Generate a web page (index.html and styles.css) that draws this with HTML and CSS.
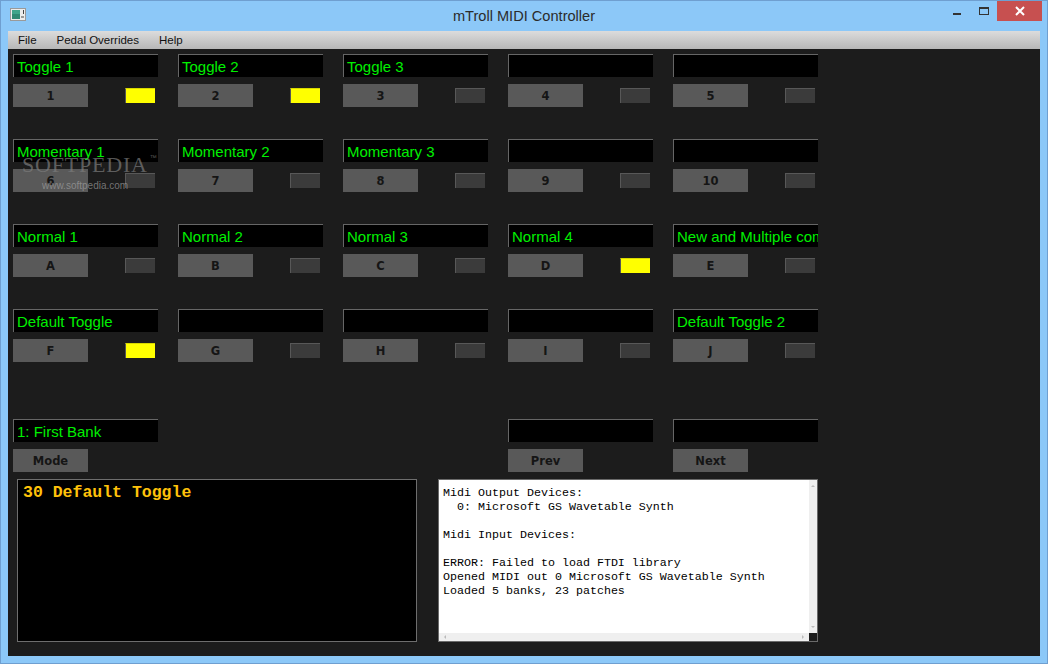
FILE: index.html
```html
<!DOCTYPE html>
<html lang="en">
<head>
    <meta charset="UTF-8">
    <title>mTroll MIDI Controller</title>
    <link rel="stylesheet" href="styles.css">
</head>
<body>
<div class="window">
    <div class="titlebar">
        <div class="titlebar-left">
            <svg class="app-icon" width="16" height="13" viewBox="0 0 16 13">
                <rect x="0.5" y="0.5" width="15" height="12" fill="#ececec" stroke="#9a9a9a"/>
                <rect x="2" y="2" width="8" height="9" fill="#2f8a74"/>
                <rect x="2" y="2" width="8" height="4" fill="#3fa58b"/>
                <rect x="11" y="8" width="3" height="2" fill="#9a9a9a"/>
                <rect x="13" y="2" width="1" height="4" fill="#444"/>
            </svg>
        </div>
        <div class="title">mTroll MIDI Controller</div>
        <div class="caption">
            <svg class="cap-btn" width="26" height="20"><rect x="9" y="12" width="8" height="2" fill="#333"/></svg>
            <svg class="cap-btn" width="27" height="20"><rect x="9.5" y="6.5" width="9" height="7" fill="none" stroke="#333"/><rect x="9" y="6" width="10" height="2" fill="#333"/></svg>
            <svg class="cap-btn close" width="45" height="20"><path d="M19 6 L27 14 M27 6 L19 14" stroke="#fff" stroke-width="2"/></svg>
        </div>
    </div>

    <div class="client">
        <div class="menubar">
            <span class="menu-item">File</span>
            <span class="menu-item">Pedal Overrides</span>
            <span class="menu-item">Help</span>
        </div>

        <div class="content">
            <div class="pedals">
                <div class="slot"><div class="name">Toggle 1</div><div class="ctl"><div class="btn">1</div><div class="led on"></div></div></div>
                <div class="slot"><div class="name">Toggle 2</div><div class="ctl"><div class="btn">2</div><div class="led on"></div></div></div>
                <div class="slot"><div class="name">Toggle 3</div><div class="ctl"><div class="btn">3</div><div class="led"></div></div></div>
                <div class="slot"><div class="name"></div><div class="ctl"><div class="btn">4</div><div class="led"></div></div></div>
                <div class="slot"><div class="name"></div><div class="ctl"><div class="btn">5</div><div class="led"></div></div></div>

                <div class="slot"><div class="name">Momentary 1</div><div class="ctl"><div class="btn">6</div><div class="led"></div></div></div>
                <div class="slot"><div class="name">Momentary 2</div><div class="ctl"><div class="btn">7</div><div class="led"></div></div></div>
                <div class="slot"><div class="name">Momentary 3</div><div class="ctl"><div class="btn">8</div><div class="led"></div></div></div>
                <div class="slot"><div class="name"></div><div class="ctl"><div class="btn">9</div><div class="led"></div></div></div>
                <div class="slot"><div class="name"></div><div class="ctl"><div class="btn">10</div><div class="led"></div></div></div>

                <div class="slot"><div class="name">Normal 1</div><div class="ctl"><div class="btn">A</div><div class="led"></div></div></div>
                <div class="slot"><div class="name">Normal 2</div><div class="ctl"><div class="btn">B</div><div class="led"></div></div></div>
                <div class="slot"><div class="name">Normal 3</div><div class="ctl"><div class="btn">C</div><div class="led"></div></div></div>
                <div class="slot"><div class="name">Normal 4</div><div class="ctl"><div class="btn">D</div><div class="led on"></div></div></div>
                <div class="slot"><div class="name">New and Multiple commands</div><div class="ctl"><div class="btn">E</div><div class="led"></div></div></div>

                <div class="slot"><div class="name">Default Toggle</div><div class="ctl"><div class="btn">F</div><div class="led on"></div></div></div>
                <div class="slot"><div class="name"></div><div class="ctl"><div class="btn">G</div><div class="led"></div></div></div>
                <div class="slot"><div class="name"></div><div class="ctl"><div class="btn">H</div><div class="led"></div></div></div>
                <div class="slot"><div class="name"></div><div class="ctl"><div class="btn">I</div><div class="led"></div></div></div>
                <div class="slot"><div class="name">Default Toggle 2</div><div class="ctl"><div class="btn">J</div><div class="led"></div></div></div>
            </div>

            <!-- bank navigation -->
            <div class="bank-row">
                <div class="slot"><div class="name">1: First Bank</div><div class="ctl"><div class="btn">Mode</div></div></div>
                <div></div>
                <div></div>
                <div class="slot"><div class="name"></div><div class="ctl"><div class="btn">Prev</div></div></div>
                <div class="slot"><div class="name"></div><div class="ctl"><div class="btn">Next</div></div></div>
            </div>

            <div class="panes">
                <div class="display">30 Default Toggle</div>
                <div class="log">
                    <pre class="log-text">Midi Output Devices:
  0: Microsoft GS Wavetable Synth

Midi Input Devices:

ERROR: Failed to load FTDI library
Opened MIDI out 0 Microsoft GS Wavetable Synth
Loaded 5 banks, 23 patches</pre>
                    <div class="vscroll"><span class="arrow up"></span><span class="arrow dn"></span></div>
                    <div class="hscroll"><span class="arrow lt"></span><span class="arrow rt"></span></div>
                    <div class="corner"></div>
                </div>
            </div>

            <div class="watermark">
                <span class="wm-logo">SOFTPEDIA<sup>™</sup></span>
                <span class="wm-url">www.softpedia.com</span>
            </div>
        </div>
    </div>
</div>
</body>
</html>
```

FILE: styles.css
```css
body {
    margin: 0;
    padding: 0;
    font-family: "Liberation Sans", Arial, sans-serif;
}

.window {
    width: 1048px;
    height: 664px;
    box-sizing: border-box;
    background-color: #8cc8f8;
    border: 1px solid #6f9fd0;
    display: flex;
    flex-direction: column;
}

/* title bar */
.titlebar {
    height: 30px;
    display: grid;
    grid-template-columns: 1fr auto 1fr;
    align-items: start;
}

.titlebar-left {
    padding: 7px 0 0 9px;
}

.app-icon {
    display: block;
}

.title {
    margin-top: 5px;
    font-size: 14.6px;
    line-height: 20px;
    color: #2b2b2b;
}

.caption {
    display: flex;
    justify-content: flex-end;
    margin-right: 5px;
}

.cap-btn {
    display: block;
}

.cap-btn.close {
    background-color: #c75050;
}

/* client area */
.client {
    flex: 1;
    margin: 0 7px 7px 7px;
    display: flex;
    flex-direction: column;
}

.menubar {
    height: 18px;
    display: flex;
    align-items: center;
    background: linear-gradient(#dcdcdc, #b7b7b7);
    font-size: 11.5px;
    color: #111;
}

.menu-item {
    padding: 0 10px;
}

.content {
    flex: 1;
    position: relative;
    background-color: #1c1c1c;
    padding: 5px 0 0 5px;
}

.pedals, .bank-row {
    display: grid;
    grid-template-columns: repeat(5, 145px);
    column-gap: 20px;
    row-gap: 32px;
}

.bank-row {
    margin-top: 57px;
}

.slot {
    display: flex;
    flex-direction: column;
    gap: 7px;
}

.name {
    height: 23px;
    box-sizing: border-box;
    background-color: #000;
    border-top: 1px solid #666;
    border-left: 1px solid #666;
    padding-left: 3px;
    font-size: 15px;
    line-height: 24px;
    color: #00f000;
    white-space: nowrap;
    overflow: hidden;
}

.ctl {
    display: flex;
    justify-content: space-between;
    align-items: center;
}

.btn {
    width: 75px;
    height: 23px;
    background-color: #595959;
    color: #151515;
    font-family: "DejaVu Sans", Verdana, sans-serif;
    font-weight: bold;
    font-size: 11.5px;
    line-height: 25px;
    text-align: center;
}

.led {
    width: 30px;
    height: 15px;
    box-sizing: border-box;
    margin-right: 3px;
    background-color: #3b3b3b;
    border-top: 1px solid #585858;
    border-left: 1px solid #585858;
}

.led.on {
    background-color: #ffff00;
    border-top-color: #d8d800;
    border-left-color: #555;
}

/* bottom panes */
.panes {
    display: flex;
    margin-top: 7px;
}

.display {
    width: 400px;
    height: 163px;
    box-sizing: border-box;
    margin-left: 4px;
    background-color: #000;
    border: 1px solid #6e6e6e;
    padding: 3px 0 0 5px;
    font-family: "Liberation Mono", "Courier New", monospace;
    font-weight: bold;
    font-size: 16.5px;
    line-height: 20px;
    color: #ffc20a;
}

.log {
    width: 380px;
    height: 163px;
    box-sizing: border-box;
    margin-left: 21px;
    background-color: #fff;
    border: 1px solid #6a6a6a;
    display: grid;
    grid-template-columns: 1fr 8px;
    grid-template-rows: 1fr 8px;
}

.log-text {
    margin: 0;
    padding: 6px 0 0 4px;
    font-family: "Liberation Mono", "Courier New", monospace;
    font-size: 11.67px;
    line-height: 14px;
    color: #000;
    overflow: hidden;
}

.vscroll, .hscroll {
    background-color: #efefef;
    display: flex;
    justify-content: space-between;
    align-items: center;
}

.vscroll {
    flex-direction: column;
    padding: 3px 0;
}

.hscroll {
    padding: 0 3px;
}

.arrow {
    width: 0;
    height: 0;
    border: 2px solid transparent;
}

.arrow.up { border-bottom-color: #bbb; }
.arrow.dn { border-top-color: #bbb; }
.arrow.lt { border-right-color: #bbb; }
.arrow.rt { border-left-color: #bbb; }

.corner {
    background-color: #1c1c1c;
}

/* screenshot watermark */
.watermark {
    position: absolute;
    left: 14px;
    top: 98px;
    display: flex;
    flex-direction: column;
    pointer-events: none;
}

.wm-logo {
    font-family: "Liberation Serif", serif;
    font-size: 22px;
    line-height: 22px;
    letter-spacing: 0.8px;
    color: rgba(125, 125, 125, 0.7);
}

.wm-logo sup {
    font-family: "Liberation Sans", sans-serif;
    font-size: 7px;
    vertical-align: 12px;
    margin-left: 2px;
}

.wm-url {
    margin: 4px 0 0 20px;
    font-size: 10px;
    line-height: 12px;
    color: rgba(165, 165, 165, 0.65);
}
```
